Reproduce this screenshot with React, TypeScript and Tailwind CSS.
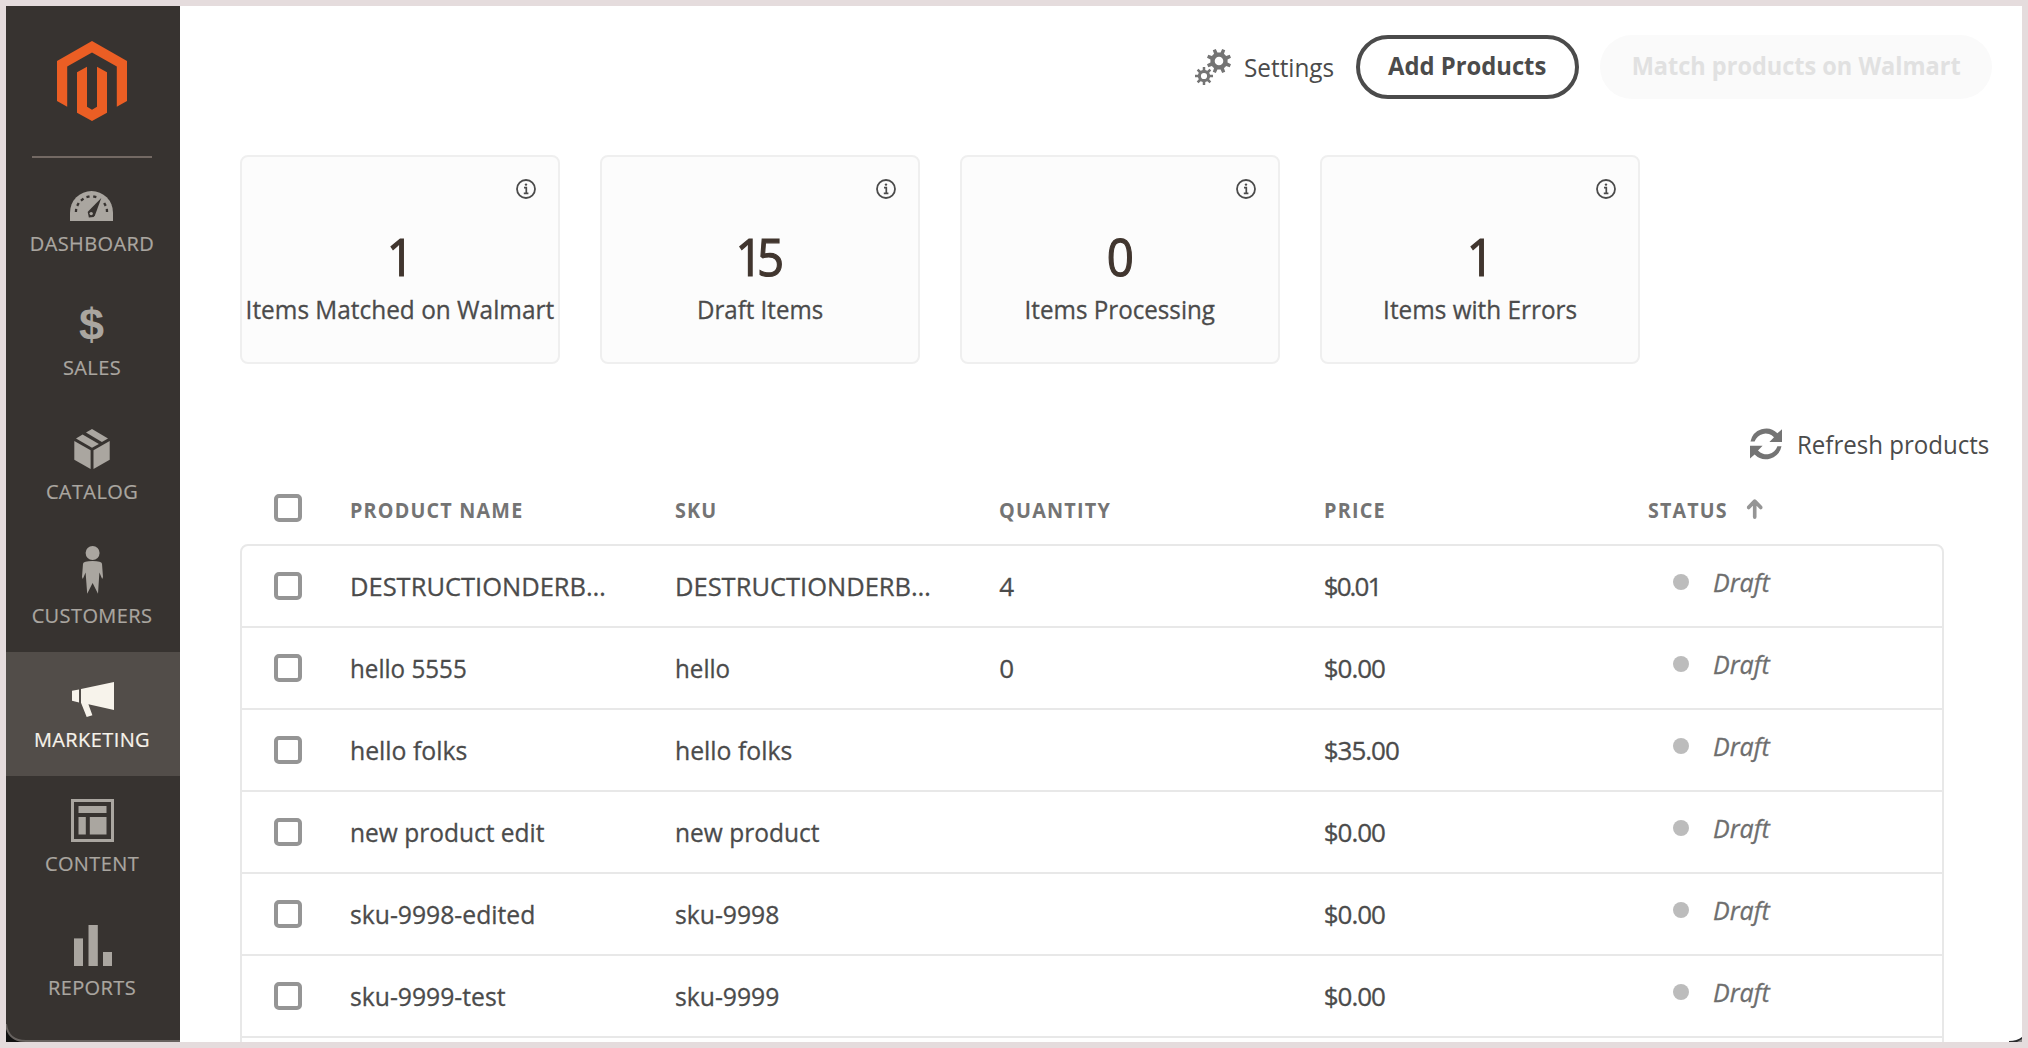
import type { ReactNode } from "react";

const LogoIcon = () => (
  <svg className="mt-[35px] mr-[2px] h-[80px] w-[70px]" viewBox="0 0 70 80" fill="#eb5e24">
    <path d="M35 0L70 19.9V60L59.8 65.8V25.4L35 11.4L10.2 25.4V65.8L0 60V19.9Z" />
    <path d="M30 25.7V65.8L35 68.7L40 65.8V25.7L50 31.3V71.7L35 80L20 71.7V31.3Z" />
  </svg>
);

const TICKS: [number, number, number][] = [
  [6, 19.4, -86],
  [7.9, 13.4, -62],
  [12.2, 8.6, -38],
  [18, 5.8, -14],
  [24.8, 5.8, 14],
  [35, 13.4, 62],
  [37, 19.4, 86],
];

const GaugeIcon = () => (
  <svg className="mt-[35px] h-[30px] w-[43px]" viewBox="0 0 43 30" fill="currentColor">
    <path d="M0 30V21.5A21.5 21.5 0 0 1 43 21.5V30Z" />
    <g fill="#373330">
      {TICKS.map(([x, y, a]) => (
        <rect key={x} x={x - 1.6} y={y - 1.1} width="3.2" height="2.3" transform={`rotate(${a} ${x} ${y})`} />
      ))}
      <path d="M31.3 7L25 24.2L23.7 26L18.9 26.6L17.7 21L19 19.6Z" />
    </g>
    <circle cx="21.2" cy="22.6" r="1.7" />
  </svg>
);

const DollarIcon = () => (
  <div className="mt-[20px] h-[50px] font-['Liberation_Sans'] text-[45px] leading-[50px] font-bold">$</div>
);

const BoxIcon = () => (
  <svg className="mt-[25px] h-[40px] w-[36px]" viewBox="0 0 35.4 40" fill="currentColor">
    <path d="M17.7 0L33.7 9.4L27.6 13L11.7 3.4Z" />
    <path d="M8.3 5.4L24.6 15L17.7 18.8L1.7 9.4Z" />
    <path d="M0 12L16.3 21.3V40L0 30.7Z" />
    <path d="M19.2 21.3L35.4 12V30.7L19.2 40Z" />
  </svg>
);

const PersonIcon = () => (
  <svg className="mt-[18px] ml-[2px] h-[48px] w-[21px]" viewBox="0 0 21 48" fill="currentColor">
    <circle cx="10.6" cy="7" r="7" />
    <path d="M1 17.8Q1.4 15 10.5 15Q19.6 15 20 17.8L21 31L20.2 33L17.4 26.5L16 47.7L10.6 37L5.2 47.7L3.6 26.5L.8 33L0 31Z" />
  </svg>
);

const MegaphoneIcon = () => (
  <svg className="mt-[30px] ml-[2px] h-[35px] w-[42px]" viewBox="0 0 42 35" fill="currentColor">
    <path d="M0 8.8L7 7.6V20.5L0 18.8Z" />
    <path d="M9 7L42 0V28L16.4 22.3L20.4 33.3L14.7 35L9 20.7Z" />
  </svg>
);

const LayoutIcon = () => (
  <svg className="mt-[23px] ml-[1px] h-[43px] w-[43px]" viewBox="0 0 43 43" fill="currentColor">
    <rect x="1.5" y="1.5" width="40" height="40" fill="none" stroke="currentColor" strokeWidth="3" />
    <rect x="7.5" y="7" width="28" height="7" />
    <rect x="7.5" y="18" width="7.3" height="17.5" />
    <rect x="18.8" y="18" width="16.7" height="17.5" />
  </svg>
);

const BarsIcon = () => (
  <svg className="mt-[25px] ml-[2px] h-[41px] w-[38px]" viewBox="0 0 38 41" fill="currentColor">
    <rect y="13.4" width="9" height="27.6" />
    <rect x="14.5" width="9.3" height="41" />
    <rect x="29" y="27" width="9" height="14" />
  </svg>
);

function gearPath(cx: number, cy: number, outer: number, inner: number, hole: number, offset: number) {
  const teeth = 8;
  const step = (Math.PI * 2) / teeth;
  const at = (r: number, a: number) => `${(cx + r * Math.cos(a)).toFixed(2)} ${(cy + r * Math.sin(a)).toFixed(2)}`;
  let d = "";
  for (let i = 0; i < teeth; i++) {
    const a = offset + i * step;
    d += `${i ? "L" : "M"}${at(inner, a - step * 0.27)}L${at(outer, a - step * 0.17)}L${at(outer, a + step * 0.17)}L${at(inner, a + step * 0.27)}`;
  }
  return `${d}ZM${cx - hole} ${cy}a${hole} ${hole} 0 1 0 ${hole * 2} 0a${hole} ${hole} 0 1 0 ${-hole * 2} 0Z`;
}

const GearsIcon = () => (
  <svg className="h-[36px] w-[36px]" viewBox="0 0 36 36" fill="#747474" fillRule="evenodd">
    <path d={gearPath(24, 12, 12.4, 8.7, 4.3, Math.PI / 8)} />
    <path d={gearPath(9, 27, 9.1, 6.2, 3.1, 0)} />
  </svg>
);

const RefreshIcon = () => (
  <svg className="h-[32px] w-[32px]" viewBox="0 0 32 32" fill="#747474">
    <path d="M.5 13.6A16 16 0 0 1 27.4 5.2L32 1.2V14H19.4L24 9.2A11.6 11.6 0 0 0 4.6 13.6Z" />
    <path d="M31.5 18.2A16 16 0 0 1 4.6 26.6L0 30.6V17.8H12.6L8 22.6A11.6 11.6 0 0 0 27.4 18.2Z" />
  </svg>
);

const InfoIcon = () => (
  <svg className="h-[20px] w-[20px]" viewBox="0 0 20 20" fill="none" stroke="#4b4b4b" strokeWidth="1.8">
    <circle cx="10" cy="10" r="9" />
    <circle cx="10" cy="5.6" r="1.2" fill="#4b4b4b" stroke="none" />
    <path d="M8 8.7H10.3V14.2M7.8 14.3H12.4" strokeWidth="1.7" />
  </svg>
);

const SortIcon = () => (
  <svg className="-mt-[3px] ml-[20px] h-[20px] w-[17px]" viewBox="0 0 17 20" fill="none" stroke="#959595" strokeWidth="3.8" strokeLinecap="round" strokeLinejoin="round">
    <path d="M8.5 18V3M2.2 8.4L8.5 2.2L14.8 8.4" />
  </svg>
);

const NAV: { label: string; icon: ReactNode; active?: boolean }[] = [
  { label: "DASHBOARD", icon: <GaugeIcon /> },
  { label: "SALES", icon: <DollarIcon /> },
  { label: "CATALOG", icon: <BoxIcon /> },
  { label: "CUSTOMERS", icon: <PersonIcon /> },
  { label: "MARKETING", icon: <MegaphoneIcon />, active: true },
  { label: "CONTENT", icon: <LayoutIcon /> },
  { label: "REPORTS", icon: <BarsIcon /> },
];

const CARDS = [
  { value: "1", label: "Items Matched on Walmart", fit: "scale-x-[0.953]" },
  { value: "15", label: "Draft Items", fit: "scale-x-[0.94]" },
  { value: "0", label: "Items Processing", fit: "scale-x-[0.945]" },
  { value: "1", label: "Items with Errors", fit: "scale-x-[0.95]" },
];

const ROWS = [
  { name: "DESTRUCTIONDERB…", sku: "DESTRUCTIONDERB…", qty: "4", price: "$0.01", fit: "scale-x-[0.98]" },
  { name: "hello 5555", sku: "hello", qty: "0", price: "$0.00", fit: "scale-x-[0.93]" },
  { name: "hello folks", sku: "hello folks", qty: "", price: "$35.00", fit: "scale-x-[0.953]" },
  { name: "new product edit", sku: "new product", qty: "", price: "$0.00", fit: "scale-x-[0.943]" },
  { name: "sku-9998-edited", sku: "sku-9998", qty: "", price: "$0.00", fit: "scale-x-[0.95]" },
  { name: "sku-9999-test", sku: "sku-9999", qty: "", price: "$0.00", fit: "scale-x-[0.95]" },
];

const Checkbox = () => <span className="block h-[28px] w-[28px] rounded-[5px] border-4 border-[#959595] bg-white" />;

const GRID = "grid grid-cols-[76px_324.6px_324.6px_324.6px_324.6px_1fr] items-center";

export default function App() {
  return (
    <div className="h-[1048px] w-[2028px] overflow-hidden bg-[#e5dcdd] p-[6px] font-['Open_Sans',sans-serif] text-[#4b4b4b]">
      <div className="relative flex h-[1036px] w-[2016px] overflow-hidden bg-white">
        <aside className="flex w-[174px] shrink-0 flex-col items-center bg-[#373330]">
          <LogoIcon />
          <div className="mt-[35px] mr-[2px] h-[2px] w-[120px] shrink-0 bg-[#736963]" />
          <nav className="-mt-[2px] w-full">
            {NAV.map((n) => (
              <div
                key={n.label}
                className={
                  n.active
                    ? "flex h-[124px] flex-col items-center bg-[#524d49] pr-[2px] text-[#f7f3eb]"
                    : "flex h-[124px] flex-col items-center pr-[2px] text-[#aaa6a0]"
                }
              >
                <div className="mr-[1px] flex h-[76px] items-start">{n.icon}</div>
                <div className="text-[20px] leading-[24px] tracking-[0.02em] [-webkit-text-stroke:0.2px]">{n.label}</div>
              </div>
            ))}
          </nav>
        </aside>

        <main className="flex-1 [-webkit-text-stroke:0.3px]">
          <header className="mt-[29px] flex h-[64px] items-center justify-end pr-[30px]">
            <GearsIcon />
            <span className="ml-[13px] w-[112px] pt-[2px] text-[25.6px] leading-[36px] [-webkit-text-stroke:0]">
              <span className="inline-block origin-left scale-x-[0.95]">Settings</span>
            </span>
            <button className="flex h-[64px] w-[223px] items-center justify-center rounded-full border-4 border-[#4b4b4b] pb-[2px] text-[25.6px] leading-[32px] font-bold whitespace-nowrap [-webkit-text-stroke:0]">
              <span className="scale-x-[0.93]">Add Products</span>
            </button>
            <button className="ml-[21px] flex h-[64px] w-[392px] items-center justify-center rounded-full bg-[#fafafa] pb-[2px] text-[25.6px] leading-[32px] font-bold whitespace-nowrap text-[#e1e1e1] [-webkit-text-stroke:0]">
              <span className="scale-x-[0.918]">Match products on Walmart</span>
            </button>
          </header>

          <section className="mt-[56px] ml-[60px] flex gap-[40px]">
            {CARDS.map((c) => (
              <div key={c.label} className="flex h-[209px] w-[320px] flex-col items-center rounded-[8px] border-2 border-[#efefef] bg-[#fcfcfc]">
                <div className="mt-[22px] mr-[22px] flex self-end">
                  <InfoIcon />
                </div>
                <div className="mt-[27px] mr-[5px] scale-x-[0.93] text-[51px] leading-[60px] font-medium tracking-[-0.12em] text-[#41362f] [-webkit-text-stroke:1.2px]">
                  {c.value}
                </div>
                <div className={`mt-[8px] text-[25.6px] leading-[32px] whitespace-nowrap ${c.fit}`}>{c.label}</div>
              </div>
            ))}
          </section>

          <div className="mt-[60px] flex h-[40px] items-center justify-end pr-[32px]">
            <RefreshIcon />
            <span className="ml-[15px] w-[193px] pt-[2px] text-[25.6px] leading-[36px] whitespace-nowrap [-webkit-text-stroke:0]">
              <span className="inline-block origin-left scale-x-[0.94]">Refresh products</span>
            </span>
          </div>

          <section className="mt-[20px] ml-[60px] w-[1704px]">
            <div className={`${GRID} h-[48px] pl-[34px] text-[20.5px] leading-[28px] font-bold tracking-[0.06em] text-[#747474] [-webkit-text-stroke:0]`}>
              <Checkbox />
              <span className="origin-left scale-x-[0.963] pt-[4px]">PRODUCT NAME</span>
              <span className="origin-left scale-x-[0.963] pt-[4px]">SKU</span>
              <span className="origin-left scale-x-[0.967] pt-[4px]">QUANTITY</span>
              <span className="origin-left scale-x-[0.967] pt-[4px]">PRICE</span>
              <span className="flex origin-left scale-x-[0.957] items-center pt-[4px]">
                STATUS
                <SortIcon />
              </span>
            </div>
            <div className="mt-[12px] h-[520px] rounded-t-[8px] border-2 border-[#e8e8e8] bg-white">
              {ROWS.map((r) => (
                <div key={r.name} className={`${GRID} h-[82px] border-b-2 border-[#e8e8e8] pl-[32px] text-[26px] leading-[36px]`}>
                  <Checkbox />
                  <span className={`origin-left ${r.fit}`}>{r.name}</span>
                  <span className={`origin-left ${r.fit}`}>{r.sku}</span>
                  <span>{r.qty}</span>
                  <span className={r.price === "$0.01" ? "tracking-[-0.075em]" : "tracking-[-0.04em]"}>{r.price}</span>
                  <span className="flex items-center pb-[8px] text-[#6e6e6e]">
                    <i className="mr-[24px] ml-[25px] h-[16px] w-[16px] rounded-full bg-[#bcbcbc]" />
                    <em className="origin-left scale-x-[0.96]">Draft</em>
                  </span>
                </div>
              ))}
            </div>
          </section>
        </main>

        <svg className="absolute bottom-0 left-0 h-[22px] w-[174px]" viewBox="0 0 174 22">
          <path d="M0 4A18 18 0 0 0 18 22H0Z" fill="#111" />
          <path d="M0 4Q2 21 20 21H174" fill="none" stroke="#67625f" strokeWidth="2" />
        </svg>
        <svg className="absolute right-0 bottom-0 h-[5px] w-[13px]" viewBox="0 0 13 5">
          <path d="M0 5V4Q8 4 13 0V5Z" fill="#2a2b2d" />
          <path d="M8 5L13 2V5Z" fill="#8d8b8b" />
        </svg>
      </div>
    </div>
  );
}
